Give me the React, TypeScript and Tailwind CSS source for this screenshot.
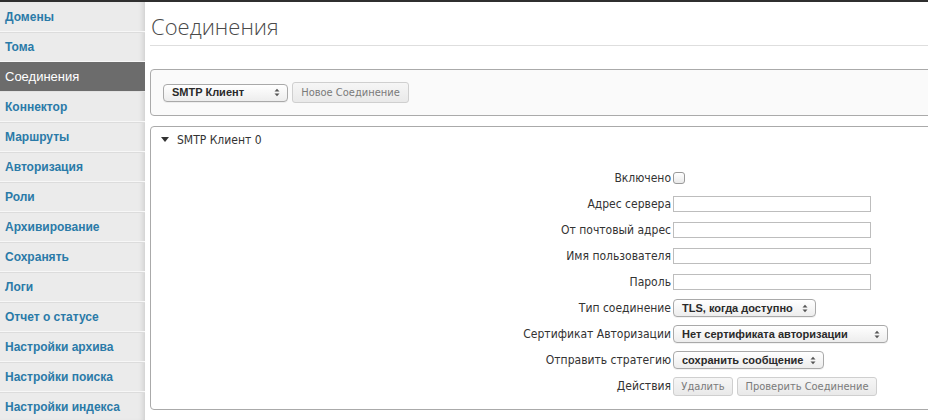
import React from "react";

const NAV = [
  "Домены",
  "Тома",
  "Соединения",
  "Коннектор",
  "Маршруты",
  "Авторизация",
  "Роли",
  "Архивирование",
  "Сохранять",
  "Логи",
  "Отчет о статусе",
  "Настройки архива",
  "Настройки поиска",
  "Настройки индекса",
];

const ACTIVE = "Соединения";

// Small up/down arrow glyph used on mac-style selects
function UpDown() {
  return (
    <svg width="6" height="9" viewBox="0 0 6 9" className="shrink-0">
      <path d="M0.5 3.5 L3 0.8 L5.5 3.5 Z" fill="#555" />
      <path d="M0.5 5.5 L3 8.2 L5.5 5.5 Z" fill="#555" />
    </svg>
  );
}

function MacSelect({ value, width }: { value: string; width: string }) {
  return (
    <div
      className={`flex h-[18px] items-center justify-between whitespace-nowrap rounded-[4px] border border-[#a9a9a9] bg-gradient-to-b from-white to-[#ededed] pl-[8px] pr-[7px] font-['Liberation_Sans',sans-serif] text-[11px] font-bold leading-none text-[#2a2a2a] shadow-[0_1px_0_rgba(0,0,0,0.05)] ${width}`}
    >
      <span>{value}</span>
      <UpDown />
    </div>
  );
}

function GreyButton({ children, width }: { children: React.ReactNode; width: string }) {
  return (
    <button
      type="button"
      className={`flex h-[19px] items-center justify-center whitespace-nowrap rounded-[3px] border border-[#cfcfcf] bg-gradient-to-b from-[#f6f6f6] to-[#e9e9e9] font-['DejaVu_Sans_Condensed','DejaVu_Sans',sans-serif] text-[11px] leading-none text-[#7a7a7a] ${width}`}
    >
      {children}
    </button>
  );
}

function Row({ label, children }: { label: string; children: React.ReactNode }) {
  return (
    <div className="flex h-[26px] items-center">
      <div className="w-[522px] whitespace-nowrap pr-[2px] text-right">{label}</div>
      <div className="flex items-center gap-[4px]">{children}</div>
    </div>
  );
}

function TextInput() {
  return <div className="h-[16px] w-[198px] border border-[#bdbdbd] bg-white" />;
}

export default function App() {
  return (
    <div className="flex h-[420px] w-[928px] overflow-hidden border-t-2 border-[#2f2f2f] bg-white">
      {/* Sidebar */}
      <nav className="flex w-[145px] shrink-0 flex-col bg-[#ebebeb] shadow-[inset_-5px_0_5px_-3px_rgba(0,0,0,0.12)]">
        {NAV.map((item) => {
          const active = item === ACTIVE;
          return (
            <div
              key={item}
              className={
                active
                  ? "flex h-[30px] shrink-0 items-center whitespace-nowrap border-b border-[#e2e2e2] bg-[#6c6c6c] pl-[5px] font-['Liberation_Sans',sans-serif] text-[13px] text-white"
                  : "flex h-[30px] shrink-0 items-center whitespace-nowrap border-b border-[#f7f7f7] pl-[5px] font-['Liberation_Sans',sans-serif] text-[12px] font-bold text-[#2a7aa8] shadow-[0_1px_0_#dcdcdc]"
              }
            >
              {item}
            </div>
          );
        })}
      </nav>

      {/* Main */}
      <main className="flex min-w-0 flex-1 flex-col pl-[5px]">
        <h1 className="mt-[9px] h-[35px] whitespace-nowrap border-b border-[#dedede] pl-[1px] font-['Open_Sans',sans-serif] text-[22px] font-light leading-[30px] text-[#4a4a4a]">
          Соединения
        </h1>

        {/* Toolbar panel */}
        <div className="-mr-[6px] mt-[23px] flex h-[47px] items-center gap-[4px] rounded-[4px] border border-[#aaaaaa] bg-[#fafafa] pl-[12px]">
          <MacSelect value="SMTP Клиент" width="w-[125px]" />
          <GreyButton width="w-[117px] h-[21px]">Новое Соединение</GreyButton>
        </div>

        {/* Connection panel */}
        <div className="-mr-[6px] mt-[10px] flex h-[284px] flex-col rounded-[4px] border border-[#aaaaaa] bg-white font-['DejaVu_Sans_Condensed','DejaVu_Sans',sans-serif] text-[12px] text-[#333]">
          <div className="flex h-[24px] items-center whitespace-nowrap pl-[10px] pt-[1px]">
            <svg width="8" height="5" viewBox="0 0 8 5" className="mr-[8px]">
              <path d="M0 0 L8 0 L4 5 Z" fill="#333" />
            </svg>
            <span>SMTP Клиент 0</span>
          </div>

          <div className="mt-[14px] flex flex-col">
            <Row label="Включено">
              <div className="h-[12px] w-[12px] rounded-[3px] border border-[#9a9a9a] bg-gradient-to-b from-white to-[#eaeaea]" />
            </Row>
            <Row label="Адрес сервера">
              <TextInput />
            </Row>
            <Row label="От почтовый адрес">
              <TextInput />
            </Row>
            <Row label="Имя пользователя">
              <TextInput />
            </Row>
            <Row label="Пароль">
              <TextInput />
            </Row>
            <Row label="Тип соединение">
              <MacSelect value="TLS, когда доступно" width="w-[143px]" />
            </Row>
            <Row label="Сертификат Авторизации">
              <MacSelect value="Нет сертификата авторизации" width="w-[215px]" />
            </Row>
            <Row label="Отправить стратегию">
              <MacSelect value="сохранить сообщение" width="w-[151px]" />
            </Row>
            <Row label="Действия">
              <GreyButton width="w-[60px]">Удалить</GreyButton>
              <GreyButton width="w-[140px]">Проверить Соединение</GreyButton>
            </Row>
          </div>
        </div>
      </main>
    </div>
  );
}
